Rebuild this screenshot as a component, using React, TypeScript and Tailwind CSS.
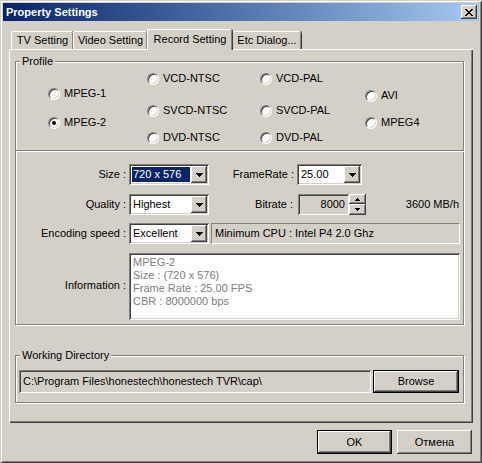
import React from 'react';

const raised =
  'shadow-[inset_-1px_-1px_#404040,inset_1px_1px_#ffffff,inset_-2px_-2px_#808080,inset_2px_2px_#d4d0c8]';
const sunken =
  'shadow-[inset_1px_1px_#808080,inset_-1px_-1px_#ffffff,inset_2px_2px_#404040,inset_-2px_-2px_#d4d0c8]';
const etched = 'border border-[#808080] shadow-[inset_1px_1px_#ffffff,1px_1px_#ffffff]';

function DownArrow() {
  return (
    <svg width="7" height="4" viewBox="0 0 7 4" shapeRendering="crispEdges">
      <path d="M0 0h7v1H0zM1 1h5v1H1zM2 2h3v1H2zM3 3h1v1H3z" fill="#000" />
    </svg>
  );
}

function SmallArrow({ up }: { up?: boolean }) {
  return (
    <svg width="5" height="3" viewBox="0 0 5 3" shapeRendering="crispEdges">
      <path d={up ? 'M2 0h1v1H2zM1 1h3v1H1zM0 2h5v1H0z' : 'M0 0h5v1H0zM1 1h3v1H1zM2 2h1v1H2z'} fill="#000" />
    </svg>
  );
}

function Combo({ value, className, selected }: { value: string; className: string; selected?: boolean }) {
  return (
    <div className={`flex h-[21px] bg-white p-[2px] ${sunken} ${className}`}>
      <div className="flex flex-1 items-center p-px">
        <span
          className={`flex h-full w-full items-center pl-[1px] ${selected ? 'bg-[#0a246a] text-white' : ''}`}
        >
          {value}
        </span>
      </div>
      <div className={`flex w-[16px] items-center justify-center bg-[#d4d0c8] ${raised}`}>
        <DownArrow />
      </div>
    </div>
  );
}

function Radio({ label, checked, className }: { label: string; checked?: boolean; className?: string }) {
  return (
    <div className={`flex h-[13px] items-center ${className ?? ''}`}>
      <span className="flex h-[12px] w-[12px] items-center justify-center rounded-full border border-t-[#808080] border-l-[#808080] border-b-white border-r-white bg-white shadow-[inset_1px_1px_#404040,inset_-1px_-1px_#d4d0c8]">
        {checked && <span className="h-[4px] w-[4px] rounded-full bg-black" />}
      </span>
      <span className="ml-[4px]">{label}</span>
    </div>
  );
}

function Button({ label, className }: { label: string; className: string }) {
  return (
    <div className={`flex items-center justify-center border border-black bg-[#d4d0c8] ${className}`}>
      <div className={`flex h-full w-full items-center justify-center ${raised}`}>{label}</div>
    </div>
  );
}

const tabs = ['TV Setting', 'Video Setting', 'Record Setting', 'Etc Dialog...'];
const tabWidths = ['w-[62px]', 'w-[74px]', 'w-[85px]', 'w-[69px]'];

export default function App() {
  return (
    <div className="h-[463px] w-[482px] bg-[#d4d0c8] p-[3px] font-['Liberation_Sans',Arial,sans-serif] text-[11px] text-black shadow-[inset_1px_1px_#d4d0c8,inset_-1px_-1px_#404040,inset_2px_2px_#ffffff,inset_-2px_-2px_#808080]">
      {/* title bar */}
      <div className="flex h-[18px] items-center justify-between bg-gradient-to-r from-[#0a246a] to-[#a6caf0] pl-[3px] pr-[2px]">
        <span className="text-[11px] font-bold text-white">Property Settings</span>
        <div className={`flex h-[14px] w-[16px] items-center justify-center bg-[#d4d0c8] ${raised}`}>
          <svg width="8" height="7" viewBox="0 0 8 7" shapeRendering="crispEdges">
            <path
              d="M0 0h2v1H0zM6 0h2v1H6zM1 1h2v1H1zM5 1h2v1H5zM2 2h4v1H2zM3 3h2v1H3zM2 4h4v1H2zM1 5h2v1H1zM5 5h2v1H5zM0 6h2v1H0zM6 6h2v1H6z"
              fill="#000"
            />
          </svg>
        </div>
      </div>

      <div className="px-[6px] pt-[8px]">
        {/* tabs */}
        <div className="flex h-[20px] items-end pl-[2px]">
          {tabs.map((t, i) => {
            const active = i === 2;
            return (
              <div
                key={t}
                className={`flex items-center justify-center rounded-t-[2px] border-l border-t border-white bg-[#d4d0c8] shadow-[inset_-1px_0_#808080,1px_0_#404040] ${tabWidths[i]} ${
                  active ? 'relative z-10 -mb-px h-[21px] pb-[2px]' : 'h-[18px]'
                }`}
              >
                {t}
              </div>
            );
          })}
        </div>

        {/* tab panel */}
        <div className="h-[374px] bg-[#d4d0c8] pl-[6px] pr-[9px] pt-[12px] shadow-[inset_1px_1px_#ffffff,inset_-1px_-1px_#404040,inset_-2px_-2px_#808080]">
          {/* profile */}
          <div className={`relative flex h-[90px] ${etched}`}>
            <span className="absolute -top-[7px] left-[4px] bg-[#d4d0c8] px-[2px] leading-[13px]">Profile</span>
            <div className="ml-[32px] flex w-[99px] flex-col">
              <Radio label="MPEG-1" className="mt-[25px]" />
              <Radio label="MPEG-2" checked className="mt-[16px]" />
            </div>
            <div className="flex w-[113px] flex-col">
              <Radio label="VCD-NTSC" className="mt-[10px]" />
              <Radio label="SVCD-NTSC" className="mt-[19px]" />
              <Radio label="DVD-NTSC" className="mt-[14px]" />
            </div>
            <div className="flex w-[105px] flex-col">
              <Radio label="VCD-PAL" className="mt-[10px]" />
              <Radio label="SVCD-PAL" className="mt-[19px]" />
              <Radio label="DVD-PAL" className="mt-[14px]" />
            </div>
            <div className="flex flex-col">
              <Radio label="AVI" className="mt-[27px]" />
              <Radio label="MPEG4" className="mt-[14px]" />
            </div>
          </div>

          {/* settings */}
          <div className={`-mt-px flex h-[175px] flex-col pr-[3px] pt-[13px] ${etched}`}>
            <div className="flex h-[21px] items-center">
              <span className="w-[110px] text-right">Size :</span>
              <Combo value="720 x 576" selected className="ml-[3px] w-[80px]" />
              <span className="w-[85px] text-right">FrameRate :</span>
              <Combo value="25.00" className="ml-[3px] w-[65px]" />
            </div>
            <div className="mt-[9px] flex h-[21px] items-center">
              <span className="w-[110px] text-right">Quality :</span>
              <Combo value="Highest" className="ml-[3px] w-[80px]" />
              <span className="w-[84px] text-right">Bitrate :</span>
              <div className={`ml-[5px] flex h-[21px] w-[51px] items-center justify-end pr-[4px] ${sunken}`}>8000</div>
              <div className="flex h-[21px] w-[17px] flex-col">
                <div className={`flex h-[10px] items-center justify-center ${raised}`}>
                  <SmallArrow up />
                </div>
                <div className={`flex h-[11px] items-center justify-center ${raised}`}>
                  <SmallArrow />
                </div>
              </div>
              <span className="flex-1 pr-[1px] text-right">3600 MB/h</span>
            </div>
            <div className="mt-[8px] flex h-[21px] items-center">
              <span className="w-[110px] text-right">Encoding speed :</span>
              <Combo value="Excellent" className="ml-[3px] w-[80px]" />
              <div className="ml-[2px] flex h-[21px] flex-1 items-center border border-t-[#808080] border-l-[#808080] border-b-white border-r-white pl-[3px]">
                Minimum CPU : Intel P4 2.0 Ghz
              </div>
            </div>
            <div className="mt-[9px] flex h-[67px] items-center">
              <span className="w-[110px] pb-[3px] text-right">Information :</span>
              <div className={`ml-[3px] h-full flex-1 bg-white pl-[4px] pt-[3px] leading-[13px] text-[#808080] ${sunken}`}>
                <div>MPEG-2</div>
                <div>Size : (720 x 576)</div>
                <div>Frame Rate : 25.00 FPS</div>
                <div>CBR : 8000000 bps</div>
              </div>
            </div>
          </div>

          {/* working directory */}
          <div className={`relative mt-[30px] flex h-[48px] pl-[3px] pr-[3px] pt-[14px] ${etched}`}>
            <span className="absolute -top-[7px] left-[4px] bg-[#d4d0c8] px-[2px] leading-[13px]">Working Directory</span>
            <div className={`flex h-[23px] w-[352px] items-center pl-[4px] ${sunken}`}>
              C:\Program Files\honestech\honestech TVR\cap\
            </div>
            <Button label="Browse" className="ml-[2px] h-[23px] w-[86px]" />
          </div>
        </div>

        {/* dialog buttons */}
        <div className="mt-[7px] flex justify-end gap-[5px] pr-px">
          <Button label="OK" className="h-[24px] w-[75px]" />
          <div className={`flex h-[24px] w-[75px] items-center justify-center ${raised}`}>Отмена</div>
        </div>
      </div>
    </div>
  );
}
